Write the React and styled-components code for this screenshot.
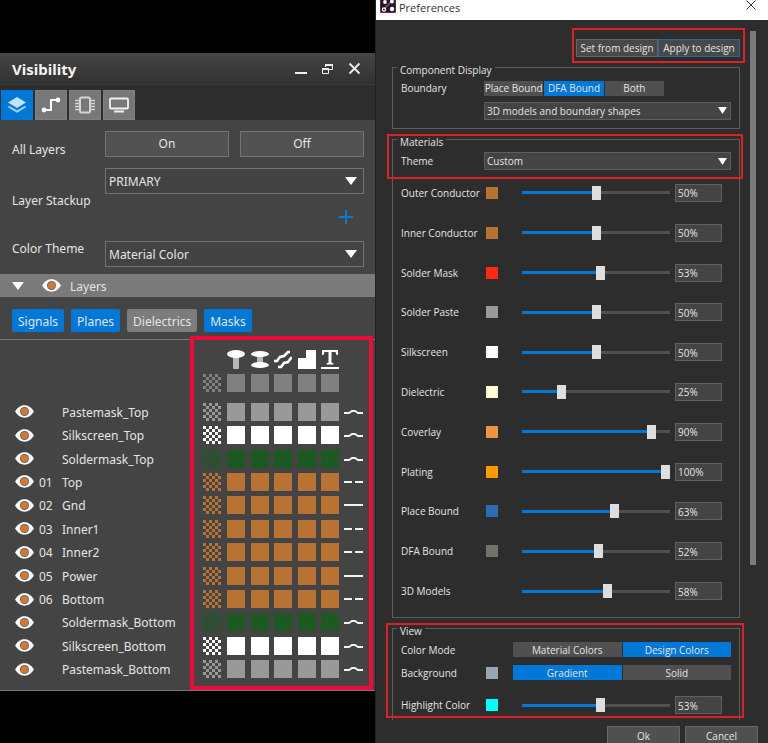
import React, { useState } from "react";
import styled, { createGlobalStyle, css } from "styled-components";

const BLUE = "#0078d7";
const COPPER = "#b87333";

const GlobalStyle = createGlobalStyle`
  *, *::before, *::after { box-sizing: border-box; }
  body {
    margin: 0;
    background: #000;
    overflow: hidden;
    font-family: "Open Sans", "Noto Sans", sans-serif;
    color: #e4e4e4;
  }
  button, input, select { font: inherit; color: inherit; margin: 0; }
  button { padding: 0; border: 0; background: none; cursor: pointer; }
  svg { display: block; }
`;

const Page = styled.main`
  display: grid;
  grid-template-columns: 375fr 393fr;
  min-height: 100vh;
`;

/* ---------- Visibility panel ---------- */

const VisibilityPane = styled.section`
  padding-top: 53px;
  font-family: "Noto Sans", "Open Sans", sans-serif;
  font-size: 12px;
  line-height: 16px;
`;

const Panel = styled.div`
  background: #444;
  border-bottom: 1px solid #777;
`;

const PanelHeader = styled.header`
  display: flex;
  align-items: center;
  justify-content: space-between;
  height: 32px;
  padding: 0 12px;
  background: linear-gradient(#454545, #313131);
  border-bottom: 1px solid #3c3c3c;
`;

const PanelTitle = styled.h1`
  margin: 0;
  font-size: 15px;
  line-height: 20px;
  font-weight: 700;
  color: #f4f4f4;
`;

const WindowButtons = styled.div`
  display: flex;
  gap: 12px;
`;

const WindowButton = styled.button`
  width: 15px;
  height: 14px;
  color: #eee;
`;

const TabBar = styled.nav`
  display: flex;
  gap: 2px;
  padding: 5px 1px 0;
  height: 35px;
  background: #2d2d2d;
`;

const Tab = styled.button`
  display: grid;
  place-items: center;
  width: 32px;
  height: 30px;
  background: ${(p) => (p.$active ? BLUE : "#787878")};
  border: 1px solid ${(p) => (p.$active ? BLUE : "#808080")};
`;

const Fields = styled.div`
  padding: 11px 11px 7px 12px;
`;

const FieldRow = styled.div`
  display: grid;
  grid-template-columns: 93px 1fr;
  align-items: center;
  min-height: ${(p) => p.$height}px;
  margin-bottom: ${(p) => p.$after || 0}px;
`;

const FieldLabel = styled.label`
  align-self: ${(p) => (p.$top ? "start" : "center")};
`;

const FieldControls = styled.div`
  align-self: start;
  display: flex;
  gap: 11px;
  flex-wrap: wrap;
  justify-content: flex-end;
`;

const ToggleButton = styled.button`
  flex: 1;
  height: 26px;
  background: #525252;
  border: 1px solid #737373;
`;

const SelectWrap = styled.div`
  display: grid;
  flex: 1 0 100%;
  align-items: center;
  > * { grid-area: 1 / 1; }
  > svg { justify-self: end; margin-right: ${(p) => p.$inset || 7}px; pointer-events: none; }
`;

const PanelSelect = styled.select`
  appearance: none;
  width: 100%;
  height: 26px;
  padding: 2px 3px 0;
  background: #434343;
  border: 1px solid #737373;
  border-radius: 0;
`;

const AddButton = styled.button`
  width: 14px;
  height: 14px;
  margin: 5px 11px 0 0;
`;

const GroupHeader = styled.div`
  display: flex;
  align-items: center;
  height: 23px;
  padding-left: 12px;
  background: #7a7a7a;
`;

const GroupName = styled.span`
  padding: 2px 0 0 9px;
`;

const IconButton = styled.button`
  display: grid;
  margin-left: ${(p) => p.$indent || 0}px;
`;

const Chips = styled.div`
  display: flex;
  gap: 7px;
  padding: 12px 12px 7px;
`;

const Chip = styled.button`
  height: 23px;
  padding: 2px 6px 0;
  border-radius: 2px;
  background: ${(p) => (p.$active ? BLUE : "#7c7c7c")};
`;

const Matrix = styled.div`
  position: relative;
  padding: 8px 0;
  border-top: 1px solid #777;
`;

const layerColumns = css`
  display: grid;
  grid-template-columns: 24px 23px 1fr 24px 112px 24px;
  align-items: center;
  padding: 0 12px 0 15px;
`;

const MatrixHead = styled.div`
  ${layerColumns}
  height: ${(p) => p.$height}px;
`;

const Cells = styled.div`
  grid-column: 5;
  display: flex;
  justify-content: space-between;
`;

const LayerList = styled.ul`
  display: grid;
  grid-auto-rows: 1fr;
  height: 281px;
  margin: 4px 0 1px;
  padding: 0;
  list-style: none;
`;

const LayerRow = styled.li`
  ${layerColumns}
`;

const LayerText = styled.span`
  padding-top: 2px;
  white-space: nowrap;
`;

const LineSlot = styled.div`
  padding-left: 5px;
`;

const CheckerSlot = styled.button`
  grid-column: 4;
  width: 18px;
`;

const Cell = styled.button`
  width: 18px;
  height: 18px;
  background: ${(p) => p.$color};
`;

const HeadIcon = styled.span`
  width: 18px;
`;

const Callout = styled.div`
  position: absolute;
  inset: ${(p) => p.$inset};
  width: ${(p) => p.$width || "auto"};
  height: ${(p) => p.$height || "auto"};
  border: ${(p) => p.$weight || 2}px solid ${(p) => p.$color || "#dc2026"};
  pointer-events: none;
`;

/* ---------- Preferences dialog ---------- */

const Dialog = styled.section`
  height: 100vh;
  overflow: hidden;
  border-left: 1px solid #222;
  background: #2d2d2d;
  font-size: 10px;
  line-height: 14px;
`;

const DialogHeader = styled.header`
  display: flex;
  align-items: flex-start;
  justify-content: space-between;
  height: 20px;
  padding: 0 11px 0 4px;
  background: #fff;
  color: #333;
`;

const DialogTitle = styled.h2`
  display: flex;
  gap: 3px;
  margin: 0;
  font-size: 11px;
  line-height: 15px;
  font-weight: 400;
`;

const DialogBody = styled.div`
  display: grid;
  grid-template-columns: 1fr 6px;
  column-gap: 10px;
  padding: 11px 12px 0 16px;
`;

const Scrollbar = styled.div`
  height: 534px;
  background: #7a7a7a;
`;

const Actions = styled.div`
  position: relative;
  display: flex;
  justify-content: flex-end;
  padding-top: 8px;
`;

const ActionButton = styled.button`
  height: 18px;
  width: 82px;
  background: #484848;
  border: 1px solid ${(p) => (p.$focus ? "#1c6ba8" : "#666")};
  white-space: nowrap;
`;

const GroupWrap = styled.div`
  position: relative;
`;

const Group = styled.fieldset`
  min-width: 0;
  margin: 0;
  padding: ${(p) => p.$pad};
  border: 1px solid #5c5c5c;
  ${(p) => p.$open && css`border-bottom: 0;`}
`;

const Legend = styled.legend`
  margin-left: -4px;
  padding: 6px 3px 0;
`;

const PrefRow = styled.div`
  display: grid;
  grid-template-columns: 83px 1fr;
  align-items: center;
  min-height: ${(p) => p.$height || 18}px;
`;

const Segments = styled.div`
  display: flex;
  gap: 1px;
  ${(p) => p.$narrow && css`width: 180px;`}
`;

const Segment = styled.button`
  flex: 1 1 0;
  height: 15px;
  background: ${(p) => (p.$active ? BLUE : "#505050")};
  white-space: nowrap;
`;

const PrefSelect = styled.select`
  appearance: none;
  width: 100%;
  height: 18px;
  padding: 0 2px;
  background: #444;
  border: 1px solid #5e5e5e;
  border-radius: 0;
`;

const SliderList = styled.div`
  display: grid;
  grid-auto-rows: 1fr;
  height: 438px;
  margin-top: 3px;
`;

const SliderRow = styled.div`
  display: grid;
  grid-template-columns: 85px 36px 1fr 47px;
  align-items: center;
  padding-right: 9px;
`;

const ColorModeRow = styled.div`
  display: grid;
  grid-template-columns: 85px 27px 1fr;
  align-items: center;
  height: 23px;
`;

const HighlightSlot = styled.div`
  padding-top: 12px;
`;

const Swatch = styled.button`
  width: 12px;
  height: 12px;
  background: ${(p) => p.$color};
`;

const Slider = styled.input`
  grid-column: 3;
  appearance: none;
  width: calc(100% - 5px);
  height: 14px;
  background: linear-gradient(to right, ${BLUE} var(--value), #505050 var(--value)) center / 100% 3px no-repeat;
  &::-webkit-slider-thumb {
    appearance: none;
    width: 9px;
    height: 14px;
    background: #dedede;
  }
`;

const ValueBox = styled.input`
  grid-column: 4;
  width: 100%;
  height: 18px;
  padding: 1px 2px 0;
  background: #444;
  border: 1px solid #606060;
`;

const Footer = styled.footer`
  display: flex;
  justify-content: flex-end;
  gap: 5px;
  margin-top: 6px;
  padding-right: 10px;
`;

const FooterButton = styled.button`
  width: 73px;
  height: 20px;
  background: #505050;
  border: 1px solid #666;
`;

/* ---------- Icons ---------- */

const Arrow = ({ w = 12, h = 8 }) => (
  <svg width={w} height={h} viewBox="0 0 12 8" preserveAspectRatio="none"><path d="M0 0h12L6 8z" fill="#fff" /></svg>
);

const Eye = () => (
  <svg width="19" height="13" viewBox="0 0 19 13">
    <path d="M0 6.500C3 2 6 .3 9.500 .3S16 2 19 6.500C16 11 13 12.700 9.500 12.700S3 11 0 6.500z" fill="#fff" />
    <circle cx="9.500" cy="6.500" r="4.500" fill="#666" />
    <circle cx="9.500" cy="6.500" r="3.500" fill="#d9782c" />
  </svg>
);

const checkerCells = [];
for (let y = 0; y < 6; y++) for (let x = 0; x < 6; x++) if ((x + y) % 2 === 0) checkerCells.push([x, y]);

const Checker = ({ color }) => (
  <svg width="18" height="18" viewBox="0 0 6 6" fill={color} shapeRendering="crispEdges">
    {checkerCells.map(([x, y]) => <rect key={`${x}-${y}`} x={x} y={y} width="1" height="1" />)}
  </svg>
);

const linePaths = {
  wave: "M0 6h5l3-2h3l3 2h5",
  dash: "M0 5h8M11 5h8",
  solid: "M0 5h19",
};

const LineStyle = ({ kind }) => (
  <svg width="19" height="10" viewBox="0 0 19 10" fill="none" stroke="#f2f2f2" strokeWidth="2">
    <path d={linePaths[kind]} />
  </svg>
);

const columnIcons = [
  ["Pins", <g key="a"><rect x="6" y="5" width="6" height="14" rx="1" fill="#b8b8b8" /><ellipse cx="9" cy="4" rx="9" ry="4" fill="#fff" /></g>],
  ["Vias", <g key="b"><rect x="6" y="4" width="6" height="10" fill="#b8b8b8" /><ellipse cx="9" cy="4" rx="9" ry="3" fill="#fff" /><ellipse cx="9" cy="15" rx="9" ry="3" fill="#fff" /></g>],
  ["Etch", <path key="c" d="M0 11h3l3-4 4-1 4-4h2M4 17h3l3-4 4-1 3-4h1" fill="none" stroke="#fff" strokeWidth="2.600" />],
  ["Shapes", <path key="d" d="M0 8h8V0h10v19H0z" fill="#fff" />],
  ["Text", <g key="e" fill="#fff"><path d="M1 0h16v5h-1.500l-1-3H10.500v10.500l2 1v1h-7v-1l2-1V2H3.500l-1 3H1z" /><path d="M0 17h18v2H0z" /></g>],
];

const Logo = () => (
  <svg width="16" height="13" viewBox="0 0 16 13">
    <path d="M0 0h16v11a2 2 0 0 1-2 2H2a2 2 0 0 1-2-2z" fill="#171b2e" />
    <path d="M0 0v11a2 2 0 0 0 2 2h12a2 2 0 0 0 2-2V0" fill="none" stroke="#d92b50" />
    <path d="M4 9l7-7" stroke="#e03252" strokeWidth="1.500" />
    <g fill="#fff"><circle cx="5" cy="2" r="1.900" /><circle cx="12" cy="1.500" r="1.900" /><circle cx="12" cy="9" r="2.200" /></g>
    <circle cx="4" cy="9.500" r="1.600" fill="none" stroke="#fff" strokeWidth="1.300" />
  </svg>
);

/* ---------- Data ---------- */

const layers = [
  ["", "Pastemask_Top", "#999", "wave"],
  ["", "Silkscreen_Top", "#fff", "wave"],
  ["", "Soldermask_Top", "#1c5a22", "wave"],
  ["01", "Top", COPPER, "dash"],
  ["02", "Gnd", COPPER, "solid"],
  ["03", "Inner1", COPPER, "dash"],
  ["04", "Inner2", COPPER, "dash"],
  ["05", "Power", COPPER, "solid"],
  ["06", "Bottom", COPPER, "dash"],
  ["", "Soldermask_Bottom", "#1c5a22", "wave"],
  ["", "Silkscreen_Bottom", "#fff", "wave"],
  ["", "Pastemask_Bottom", "#999", "wave"],
];

const materials = [
  ["Outer Conductor", COPPER, 50],
  ["Inner Conductor", COPPER, 50],
  ["Solder Mask", "#ff2a12", 53],
  ["Solder Paste", "#999", 50],
  ["Silkscreen", "#fff", 50],
  ["Dielectric", "#fdfdd4", 25],
  ["Coverlay", "#f29540", 90],
  ["Plating", "#ff9a00", 100],
  ["Place Bound", "#2d6cb4", 63],
  ["DFA Bound", "#74706a", 52],
  ["3D Models", null, 58],
];

/* ---------- Composition ---------- */

function ColorCells({ name, color }) {
  return (
    <>
      <CheckerSlot aria-label={`${name} transparency`}><Checker color={color} /></CheckerSlot>
      <Cells>
        {columnIcons.map(([column]) => (
          <Cell key={column} $color={color} aria-label={`${name} ${column}`} />
        ))}
      </Cells>
    </>
  );
}

function PercentRow({ name, color, initial }) {
  const [value, setValue] = useState(initial);
  const id = name.toLowerCase().replace(/ /g, "-");
  return (
    <SliderRow>
      <label htmlFor={id}>{name}</label>
      {color && <Swatch $color={color} aria-label={`${name} color`} />}
      <Slider id={id} type="range" min="0" max="100" value={value}
        style={{ "--value": `${value}%` }} onChange={(e) => setValue(Number(e.target.value))} />
      <ValueBox aria-label={`${name} value`} value={`${value}%`}
        onChange={(e) => setValue(Math.min(100, parseInt(e.target.value, 10) || 0))} />
    </SliderRow>
  );
}

function SegmentedControl({ options, initial, narrow }) {
  const [selected, setSelected] = useState(initial);
  return (
    <Segments $narrow={narrow}>
      {options.map((option) => (
        <Segment key={option} $active={option === selected}
          aria-pressed={option === selected} onClick={() => setSelected(option)}>
          {option}
        </Segment>
      ))}
    </Segments>
  );
}

function Visibility() {
  const [chips, setChips] = useState({ Signals: true, Planes: true, Dielectrics: false, Masks: true });
  return (
    <VisibilityPane>
      <Panel>
        <PanelHeader>
          <PanelTitle>Visibility</PanelTitle>
          <WindowButtons>
            <WindowButton aria-label="Minimize">
              <svg width="13" height="14" viewBox="0 0 13 14"><path d="M1 10h12v2H1z" fill="currentColor" /></svg>
            </WindowButton>
            <WindowButton aria-label="Restore">
              <svg width="13" height="14" viewBox="0 0 13 14" fill="none" stroke="currentColor">
                <path d="M4.500 5V2.500h7v5H8M1.500 6.500h6v5h-6z" /><path d="M4 3h8M1 7h7" strokeWidth="2" />
              </svg>
            </WindowButton>
            <WindowButton aria-label="Close">
              <svg width="13" height="14" viewBox="0 0 13 14" fill="none" stroke="currentColor" strokeWidth="1.800">
                <path d="M1.500 1.500l10 10M11.500 1.500l-10 10" />
              </svg>
            </WindowButton>
          </WindowButtons>
        </PanelHeader>
        <TabBar>
          <Tab $active aria-label="Layers">
            <svg width="20" height="18" viewBox="0 0 20 18">
              <path d="M10 1l9 5.500-9 5.500-9-5.500z" fill="#c4e2fa" />
              <path d="M1.500 10.500L10 15.500l8.500-5" fill="none" stroke="#a9d4f6" strokeWidth="2" />
            </svg>
          </Tab>
          <Tab aria-label="Nets">
            <svg width="20" height="18" viewBox="0 0 20 18">
              <path d="M3 14h7V4h7" fill="none" stroke="#fff" strokeWidth="2" />
              <circle cx="3" cy="14" r="2.400" fill="#fff" /><circle cx="17" cy="4" r="2.400" fill="#fff" />
            </svg>
          </Tab>
          <Tab aria-label="Components">
            <svg width="20" height="18" viewBox="0 0 20 18" fill="none" stroke="#d4d4d4">
              <path d="M0 4.500h4M0 7.500h4M0 10.500h4M0 13.500h4M16 4.500h4M16 7.500h4M16 10.500h4M16 13.500h4" strokeWidth="1.500" />
              <rect x="5" y="1.500" width="10" height="15" rx="1.500" strokeWidth="2" />
            </svg>
          </Tab>
          <Tab aria-label="Display">
            <svg width="20" height="18" viewBox="0 0 20 18">
              <rect x="1" y="2.500" width="18" height="10" rx="1" fill="none" stroke="#f0f0f0" strokeWidth="1.800" />
              <path d="M5 14.500h10v2H5z" fill="#f0f0f0" />
            </svg>
          </Tab>
        </TabBar>
        <Fields>
          <FieldRow $height={37}>
            <span>All Layers</span>
            <FieldControls>
              <ToggleButton>On</ToggleButton>
              <ToggleButton>Off</ToggleButton>
            </FieldControls>
          </FieldRow>
          <FieldRow $height={65} $after={8}>
            <FieldLabel htmlFor="stackup">Layer Stackup</FieldLabel>
            <FieldControls>
              <SelectWrap>
                <PanelSelect id="stackup"><option>PRIMARY</option></PanelSelect>
                <Arrow />
              </SelectWrap>
              <AddButton aria-label="Add stackup">
                <svg width="14" height="14" viewBox="0 0 14 14"><path d="M7 0v14M0 7h14" stroke="#0a7bd0" strokeWidth="2" /></svg>
              </AddButton>
            </FieldControls>
          </FieldRow>
          <FieldRow $height={26}>
            <FieldLabel $top htmlFor="color-theme">Color Theme</FieldLabel>
            <SelectWrap>
              <PanelSelect id="color-theme"><option>Material Color</option></PanelSelect>
              <Arrow />
            </SelectWrap>
          </FieldRow>
        </Fields>
        <GroupHeader>
          <IconButton aria-label="Collapse layers"><Arrow /></IconButton>
          <IconButton $indent={18} aria-label="Show all layers"><Eye /></IconButton>
          <GroupName>Layers</GroupName>
        </GroupHeader>
        <Chips>
          {Object.keys(chips).map((name) => (
            <Chip key={name} $active={chips[name]} aria-pressed={chips[name]}
              onClick={() => setChips({ ...chips, [name]: !chips[name] })}>
              {name}
            </Chip>
          ))}
        </Chips>
        <Matrix>
          <MatrixHead $height={22}>
            <Cells>
              {columnIcons.map(([name, drawing]) => (
                <HeadIcon key={name}>
                  <svg width="18" height="19" viewBox="0 0 18 19" role="img" aria-label={name}>{drawing}</svg>
                </HeadIcon>
              ))}
            </Cells>
          </MatrixHead>
          <MatrixHead $height={26}><ColorCells name="All" color="#808080" /></MatrixHead>
          <LayerList>
            {layers.map(([number, name, color, line]) => (
              <LayerRow key={name}>
                <IconButton aria-label={`Show ${name}`}><Eye /></IconButton>
                <LayerText>{number}</LayerText>
                <LayerText>{name}</LayerText>
                <ColorCells name={name} color={color} />
                <LineSlot><LineStyle kind={line} /></LineSlot>
              </LayerRow>
            ))}
          </LayerList>
          <Callout $inset="-4px 2px 0 auto" $width="183px" $weight={4} $color="#ec0c3c" />
        </Matrix>
      </Panel>
    </VisibilityPane>
  );
}

function Preferences() {
  return (
    <Dialog>
      <DialogHeader>
        <DialogTitle><Logo />Preferences</DialogTitle>
        <button aria-label="Close preferences">
          <svg width="11" height="11" viewBox="0 0 11 11"><path d="M.5 .5l9 9M9.500 .5l-9 9" stroke="#333" /></svg>
        </button>
      </DialogHeader>
      <DialogBody>
        <div>
          <Actions>
            <ActionButton>Set from design</ActionButton>
            <ActionButton $focus>Apply to design</ActionButton>
            <Callout $inset="-3px -5px -6px auto" $width="173px" />
          </Actions>
          <GroupWrap>
            <Group $pad="3px 8px">
              <Legend>Component Display</Legend>
              <PrefRow $height={16}>
                <span>Boundary</span>
                <SegmentedControl narrow options={["Place Bound", "DFA Bound", "Both"]} initial="DFA Bound" />
              </PrefRow>
              <PrefRow $height={29}>
                <span />
                <SelectWrap $inset={4}>
                  <PrefSelect aria-label="Component display"><option>3D models and boundary shapes</option></PrefSelect>
                  <Arrow w={9} h={7} />
                </SelectWrap>
              </PrefRow>
            </Group>
          </GroupWrap>
          <GroupWrap>
            <Group $pad="3px 8px 6px">
              <Legend>Materials</Legend>
              <PrefRow>
                <label htmlFor="theme">Theme</label>
                <SelectWrap $inset={4}>
                  <PrefSelect id="theme"><option>Custom</option></PrefSelect>
                  <Arrow w={9} h={7} />
                </SelectWrap>
              </PrefRow>
              <SliderList>
                {materials.map(([name, color, initial]) => (
                  <PercentRow key={name} name={name} color={color} initial={initial} />
                ))}
              </SliderList>
            </Group>
            <Callout $inset="5px -3px auto -5px" $height="45px" />
          </GroupWrap>
          <GroupWrap>
            <Group $open $pad="0 8px 6px">
              <Legend>View</Legend>
              <ColorModeRow>
                <span>Color Mode</span>
                <span />
                <SegmentedControl options={["Material Colors", "Design Colors"]} initial="Design Colors" />
              </ColorModeRow>
              <ColorModeRow>
                <span>Background</span>
                <Swatch $color="#98a5b3" aria-label="Background color" />
                <SegmentedControl options={["Gradient", "Solid"]} initial="Gradient" />
              </ColorModeRow>
              <HighlightSlot>
                <PercentRow name="Highlight Color" color="#00ffff" initial={53} />
              </HighlightSlot>
            </Group>
            <Callout $inset="5px -4px 2px -6px" />
          </GroupWrap>
        </div>
        <Scrollbar />
      </DialogBody>
      <Footer>
        <FooterButton>Ok</FooterButton>
        <FooterButton>Cancel</FooterButton>
      </Footer>
    </Dialog>
  );
}

export default function App() {
  return (
    <>
      <GlobalStyle />
      <Page>
        <Visibility />
        <Preferences />
      </Page>
    </>
  );
}
